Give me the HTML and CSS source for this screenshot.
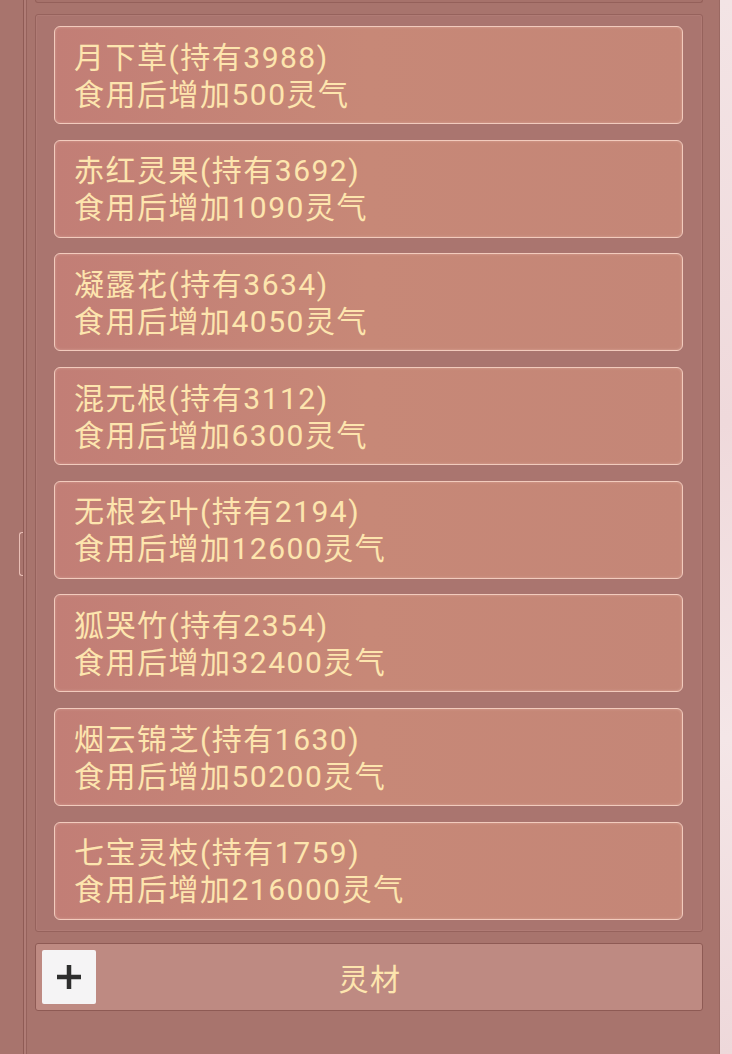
FILE: index.html
```html
<!DOCTYPE html>
<html lang="zh-CN">
<head>
    <meta charset="UTF-8">
    <meta name="viewport" content="width=device-width, initial-scale=1.0">
    <title>灵材</title>
    <link rel="stylesheet" href="styles.css">
</head>
<body>

    <div class="screen">
        <div class="side-left">
            <span class="side-tab"></span>
        </div>

        <div class="main">
            <div class="top-panel"></div>

            <div class="item-panel">
                <div class="item-card">月下草(持有3988)<br>食用后增加500灵气</div>
                <div class="item-card">赤红灵果(持有3692)<br>食用后增加1090灵气</div>
                <div class="item-card">凝露花(持有3634)<br>食用后增加4050灵气</div>
                <div class="item-card">混元根(持有3112)<br>食用后增加6300灵气</div>
                <div class="item-card">无根玄叶(持有2194)<br>食用后增加12600灵气</div>
                <div class="item-card">狐哭竹(持有2354)<br>食用后增加32400灵气</div>
                <div class="item-card">烟云锦芝(持有1630)<br>食用后增加50200灵气</div>
                <div class="item-card">七宝灵枝(持有1759)<br>食用后增加216000灵气</div>
            </div>

            <div class="tab-bar">
                <button class="add-btn" aria-label="add">
                    <svg width="26" height="26" viewBox="0 0 26 26">
                        <path d="M13 1 V25 M1 13 H25" stroke="#2e2e2e" stroke-width="4.5" fill="none"/>
                    </svg>
                </button>
                <span class="tab-title">灵材</span>
            </div>
        </div>

        <div class="side-right"></div>
    </div>

</body>
</html>
```

FILE: styles.css
```css
body {
    margin: 0;
    background-color: #a8746d;
    font-family: Roboto, "Noto Sans CJK SC", sans-serif;
}

.screen {
    display: flex;
    width: 732px;
    height: 1054px;
    overflow: hidden;
}

.side-left {
    width: 23px;
    flex-shrink: 0;
    border-right: 1px solid #8f5b55;
    box-shadow: 2px 0 0 #b07c76, 3px 0 0 #96625c;
    position: relative;
}

.side-tab {
    position: absolute;
    right: 0;
    top: 532px;
    width: 3px;
    height: 42px;
    border: 1px solid #e9bfb6;
    border-right: none;
    border-radius: 3px 0 0 3px;
}

.main {
    flex: 1;
    padding: 0 16px 0 11px;
}

.top-panel {
    height: 2px;
    border: 1px solid #94605a;
    border-top: none;
    border-radius: 0 0 3px 3px;
    background: #a6726b;
    margin-bottom: 11px;
}

.item-panel {
    display: flex;
    flex-direction: column;
    gap: 15.7px;
    padding: 11px 19px 11px 18px;
    border: 1px solid #96625c;
    border-radius: 3px;
    background: #aa756f;
    box-shadow: inset 0 0 0 1px #b07b75;
}

.item-card {
    padding: 11.5px 17px 10.5px 19px;
    border: 1px solid #f2cbbd;
    border-radius: 6px;
    background: linear-gradient(90deg, #c27e76 0%, #c78877 50%, #c48677 100%);
    box-shadow: inset 0 0 3px rgba(255, 220, 205, 0.35);
    color: #fde5ae;
    font-size: 30px;
    line-height: 37px;
    letter-spacing: 1.5px;
    white-space: nowrap;
}

.tab-bar {
    display: flex;
    align-items: center;
    height: 66px;
    margin-top: 11px;
    padding: 0 6px;
    border: 1px solid #8e5a54;
    border-radius: 3px;
    background: #be8a82;
    position: relative;
}

.add-btn {
    width: 54px;
    height: 54px;
    border: none;
    border-radius: 2px;
    background: #f5f4f5;
    display: flex;
    align-items: center;
    justify-content: center;
    padding: 0;
}

.tab-title {
    position: absolute;
    left: 2px;
    right: 0;
    text-align: center;
    color: #fde5ae;
    font-size: 30px;
    letter-spacing: 1.5px;
    pointer-events: none;
}

.side-right {
    width: 12px;
    flex-shrink: 0;
    border-left: 1px solid #9a6862;
    background: linear-gradient(180deg, #f3e4e5, #efd9db 40%, #f4e6e7 70%, #eed8da);
}
```
